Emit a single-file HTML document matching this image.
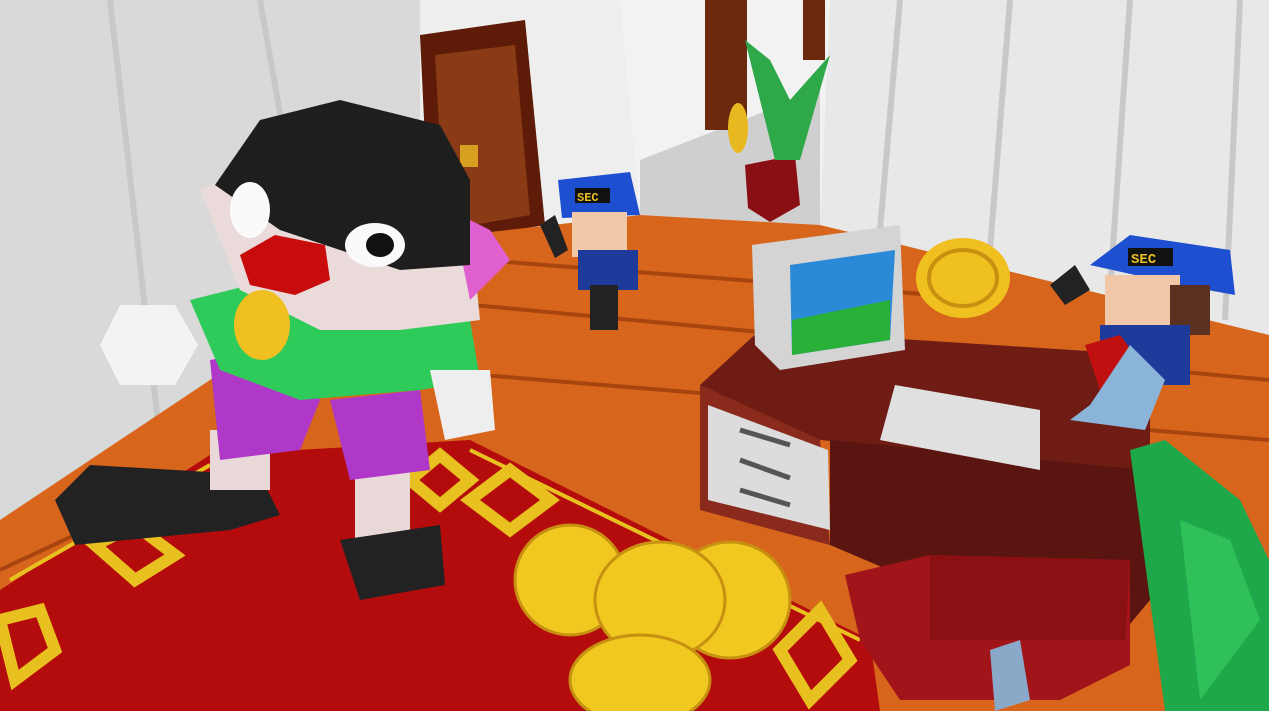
<!DOCTYPE html>
<html><head><meta charset="utf-8"><style>
html,body{margin:0;padding:0;width:1269px;height:711px;overflow:hidden;background:#ddd}
svg{display:block}
text{font-family:"Liberation Mono",monospace;font-weight:bold}
</style></head><body>
<svg width="1269" height="711" viewBox="0 0 1269 711" xmlns="http://www.w3.org/2000/svg">
<!-- walls -->
<rect width="1269" height="711" fill="#e4e4e4"/>
<polygon points="0,0 420,0 420,240 0,520" fill="#d9d9d9"/>
<polygon points="830,0 1269,0 1269,335 820,225" fill="#e8e8e8"/>
<polygon points="420,0 830,0 820,225 420,240" fill="#eeeeee"/>
<g stroke="#c8c8c8" stroke-width="6">
<line x1="110" y1="0" x2="160" y2="440"/><line x1="260" y1="0" x2="290" y2="170"/>
<line x1="900" y1="0" x2="880" y2="230"/><line x1="1010" y1="0" x2="990" y2="250"/>
<line x1="1130" y1="0" x2="1110" y2="290"/><line x1="1240" y1="0" x2="1225" y2="320"/>
</g>
<!-- hallway -->
<polygon points="620,0 830,0 820,225 640,215" fill="#f2f2f2"/>
<polygon points="640,160 820,90 820,225 640,215" fill="#cfcfcf"/>
<rect x="705" y="0" width="42" height="130" fill="#6b2a0e"/>
<rect x="803" y="0" width="22" height="60" fill="#6b2a0e"/>
<!-- door -->
<polygon points="420,35 525,20 545,225 430,245" fill="#5e1c08"/>
<polygon points="435,55 515,45 530,215 445,230" fill="#8a3a14"/>
<rect x="460" y="145" width="18" height="22" fill="#d8a020"/>
<!-- floor -->
<polygon points="0,520 420,240 640,215 820,225 1269,335 1269,711 0,711" fill="#d8651c"/>
<g stroke="#a8440e" stroke-width="4">
<line x1="420" y1="300" x2="1269" y2="380"/><line x1="300" y1="360" x2="1269" y2="440"/>
<line x1="480" y1="260" x2="1000" y2="300"/><line x1="0" y1="570" x2="300" y2="430"/>
</g>
<!-- carpet -->
<polygon points="0,590 210,455 470,440 870,640 880,711 0,711" fill="#b40c0c"/>
<line x1="10" y1="580" x2="210" y2="465" stroke="#e8c020" stroke-width="4"/>
<line x1="470" y1="450" x2="860" y2="640" stroke="#e8c020" stroke-width="4"/>
<g fill="none" stroke="#e8c020" stroke-width="12">
<polygon points="95,545 135,525 175,555 135,580"/>
<polygon points="470,500 510,470 550,500 510,530"/>
<polygon points="0,620 40,610 55,650 15,680"/>
<polygon points="780,650 820,610 850,660 810,700"/>
<polygon points="410,480 440,455 470,480 440,505"/>
</g>
<!-- pot plant -->
<polygon points="745,165 795,155 800,205 770,222 748,208" fill="#8a0f14"/>
<polygon points="775,160 745,40 770,60 790,100 830,55 800,160" fill="#2fa84a"/>
<ellipse cx="738" cy="128" rx="10" ry="25" fill="#e8b820"/>
<!-- coin on wall -->
<ellipse cx="963" cy="278" rx="47" ry="40" fill="#f0c020"/>
<ellipse cx="963" cy="278" rx="34" ry="28" fill="none" stroke="#c89010" stroke-width="4"/>
<!-- white hexagon -->
<polygon points="120,305 175,305 198,345 175,385 120,385 100,345" fill="#f3f3f3"/>
<!-- guard 1 -->
<polygon points="558,180 630,172 640,215 562,218" fill="#1e4fd0"/>
<rect x="575" y="188" width="35" height="15" fill="#111"/><text x="577" y="201" font-size="12" fill="#e8c020">SEC</text>
<rect x="572" y="212" width="55" height="45" fill="#f0c8a8"/>
<rect x="578" y="250" width="60" height="40" fill="#1e3a9a"/>
<rect x="590" y="285" width="28" height="45" fill="#222"/>
<polygon points="540,225 555,215 568,250 555,258" fill="#222"/>
<!-- desk -->
<polygon points="700,385 760,330 1150,355 1150,470 820,440" fill="#6e1c14"/>
<polygon points="700,385 820,440 830,545 700,510" fill="#8a2a1c"/>
<polygon points="708,405 828,450 830,530 708,500" fill="#dcdcdc"/>
<g stroke="#555" stroke-width="5"><line x1="740" y1="430" x2="790" y2="445"/><line x1="740" y1="460" x2="790" y2="478"/><line x1="740" y1="490" x2="790" y2="505"/></g>
<polygon points="830,440 1150,470 1150,600 1100,660 830,545" fill="#5a1510"/>
<!-- computer -->
<polygon points="752,245 900,225 905,350 780,370 755,345" fill="#d4d4d4"/>
<polygon points="790,265 895,250 890,340 792,355" fill="#2a8ad8"/>
<polygon points="792,320 890,300 890,340 792,355" fill="#28b038"/>
<!-- keyboard -->
<polygon points="895,385 1040,410 1040,470 880,440" fill="#e0e0e0"/>
<!-- guard 2 -->
<polygon points="1090,265 1130,235 1230,250 1235,295 1180,285" fill="#1e4fd0"/>
<rect x="1128" y="248" width="45" height="18" fill="#111"/><text x="1131" y="263" font-size="14" fill="#e8c020">SEC</text>
<rect x="1105" y="275" width="75" height="55" fill="#f0c8a8"/>
<rect x="1170" y="285" width="40" height="50" fill="#5a3020"/>
<rect x="1100" y="325" width="90" height="60" fill="#1e3a9a"/>
<polygon points="1050,285 1075,265 1090,290 1065,305" fill="#222"/>
<polygon points="1085,345 1120,335 1150,375 1100,390" fill="#c01010"/>
<polygon points="1130,345 1165,380 1145,430 1070,420 1090,405" fill="#8ab4d8"/>
<!-- clown -->
<polygon points="55,500 90,465 260,475 280,515 230,530 75,545" fill="#222"/>
<rect x="210" y="430" width="60" height="60" fill="#e8d8d8"/>
<rect x="355" y="460" width="55" height="80" fill="#e8d8d8"/>
<polygon points="340,540 440,525 445,585 360,600" fill="#222"/>
<polygon points="210,360 290,345 320,400 300,450 220,460" fill="#b038c8"/>
<polygon points="330,400 420,390 430,470 350,480" fill="#b038c8"/>
<polygon points="190,300 250,285 320,300 470,320 480,380 420,390 300,400 220,370" fill="#2ecb5a"/>
<polygon points="430,370 490,370 495,430 445,440" fill="#eeeeee"/>
<polygon points="200,190 250,170 470,220 480,320 400,330 320,330 240,290" fill="#eadada"/>
<polygon points="450,210 490,230 510,260 470,300 460,250" fill="#e060d0"/>
<polygon points="215,185 260,120 340,100 440,125 470,180 470,265 400,270 280,230" fill="#1e1e1e"/>
<ellipse cx="250" cy="210" rx="20" ry="28" fill="#fafafa"/>
<ellipse cx="375" cy="245" rx="30" ry="22" fill="#fafafa"/>
<ellipse cx="380" cy="245" rx="14" ry="12" fill="#111"/>
<polygon points="240,255 275,235 325,245 330,280 295,295 250,285" fill="#c80c0c"/>
<ellipse cx="262" cy="325" rx="28" ry="35" fill="#f0c020"/>
<!-- coin pile -->
<g fill="#f0c820" stroke="#c89010" stroke-width="3">
<ellipse cx="570" cy="580" rx="55" ry="55"/>
<ellipse cx="730" cy="600" rx="60" ry="58"/>
<ellipse cx="660" cy="600" rx="65" ry="58"/>
<ellipse cx="640" cy="680" rx="70" ry="45"/>
</g>
<!-- chair -->
<polygon points="845,575 930,555 1130,560 1130,665 1060,700 900,700 860,640" fill="#a0141a"/>
<polygon points="930,555 1130,560 1125,640 930,640" fill="#8a1014"/>
<polygon points="990,650 1020,640 1030,700 995,711" fill="#8aa8c8"/>
<!-- foreground plant -->
<polygon points="1130,450 1165,440 1240,500 1269,560 1269,711 1165,711 1150,600" fill="#1fa84a"/>
<polygon points="1180,520 1230,540 1260,620 1200,700" fill="#2fc05a"/>
</svg>
</body></html>
